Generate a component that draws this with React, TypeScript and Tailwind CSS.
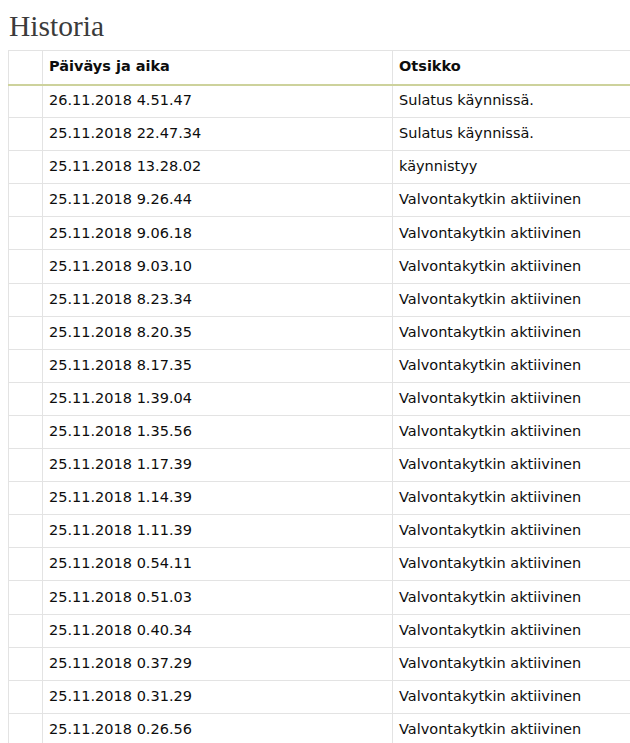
import React from 'react';

const rows: [string, string][] = [
  ['26.11.2018 4.51.47', 'Sulatus käynnissä.'],
  ['25.11.2018 22.47.34', 'Sulatus käynnissä.'],
  ['25.11.2018 13.28.02', 'käynnistyy'],
  ['25.11.2018 9.26.44', 'Valvontakytkin aktiivinen'],
  ['25.11.2018 9.06.18', 'Valvontakytkin aktiivinen'],
  ['25.11.2018 9.03.10', 'Valvontakytkin aktiivinen'],
  ['25.11.2018 8.23.34', 'Valvontakytkin aktiivinen'],
  ['25.11.2018 8.20.35', 'Valvontakytkin aktiivinen'],
  ['25.11.2018 8.17.35', 'Valvontakytkin aktiivinen'],
  ['25.11.2018 1.39.04', 'Valvontakytkin aktiivinen'],
  ['25.11.2018 1.35.56', 'Valvontakytkin aktiivinen'],
  ['25.11.2018 1.17.39', 'Valvontakytkin aktiivinen'],
  ['25.11.2018 1.14.39', 'Valvontakytkin aktiivinen'],
  ['25.11.2018 1.11.39', 'Valvontakytkin aktiivinen'],
  ['25.11.2018 0.54.11', 'Valvontakytkin aktiivinen'],
  ['25.11.2018 0.51.03', 'Valvontakytkin aktiivinen'],
  ['25.11.2018 0.40.34', 'Valvontakytkin aktiivinen'],
  ['25.11.2018 0.37.29', 'Valvontakytkin aktiivinen'],
  ['25.11.2018 0.31.29', 'Valvontakytkin aktiivinen'],
  ['25.11.2018 0.26.56', 'Valvontakytkin aktiivinen'],
];

export default function App() {
  return (
    <div className="w-[630px] h-[743px] overflow-hidden bg-white">
      <h2 className="pl-[9px] pt-[9px] h-[50px] text-[29.5px] leading-[34px] text-[#3b3b3b] font-['Liberation_Serif',serif]">
        Historia
      </h2>
      <div className="pl-[8px]">
        <table className="w-[640px] border-collapse table-fixed font-['DejaVu_Sans',sans-serif] text-[14.5px] text-[#0d0d0d]">
          <colgroup>
            <col className="w-[34px]" />
            <col className="w-[350px]" />
            <col />
          </colgroup>
          <thead>
            <tr className="h-[34px] border-t border-[#e3e3e3] border-b-2 border-b-[#cdd29c]">
              <th className="border-l border-r border-[#e3e3e3]" />
              <th className="border-r border-[#e3e3e3] text-left font-bold px-[6px]">Päiväys ja aika</th>
              <th className="text-left font-bold px-[6px]">Otsikko</th>
            </tr>
          </thead>
          <tbody>
            {rows.map(([date, title], i) => (
              <tr key={i} className="h-[33.1px] border-b border-[#e3e3e3]">
                <td className="border-l border-r border-[#e3e3e3]" />
                <td className="border-r border-[#e3e3e3] px-[6px]">{date}</td>
                <td className="px-[6px]">{title}</td>
              </tr>
            ))}
          </tbody>
        </table>
      </div>
    </div>
  );
}
